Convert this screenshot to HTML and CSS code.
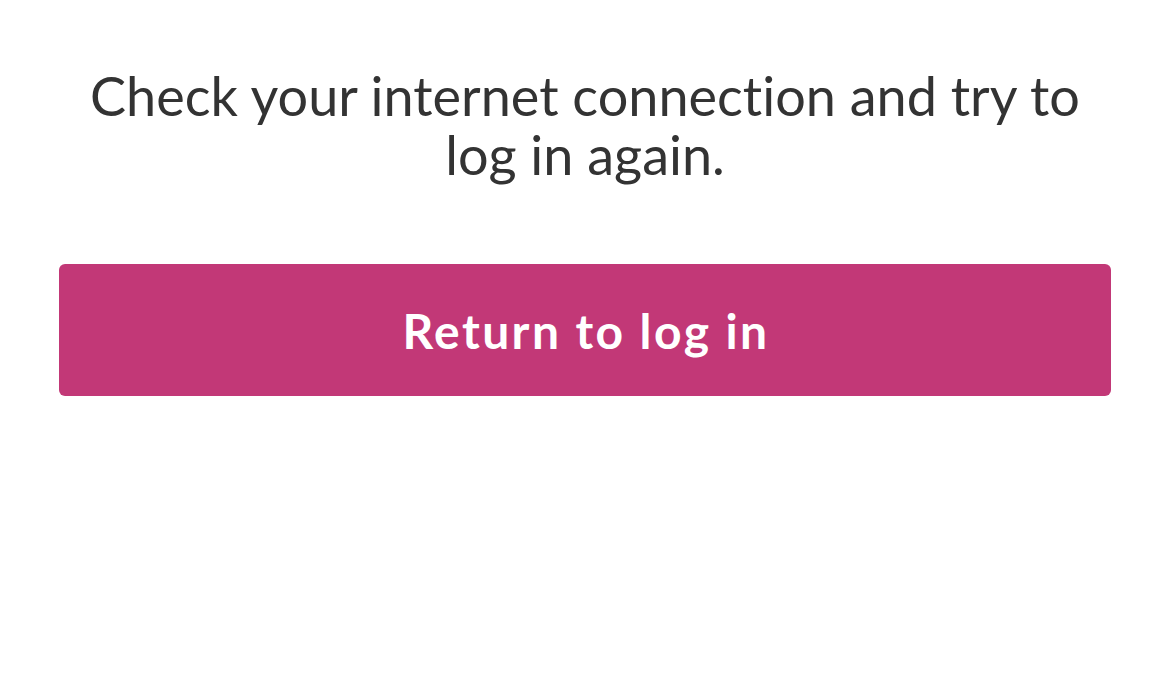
FILE: index.html
```html
<!DOCTYPE html>
<html lang="en">
<head>
<meta charset="utf-8">
<title>Connection error</title>
<link rel="stylesheet" href="styles.css">
</head>
<body>
<main class="page">
  <p class="message">Check your internet connection and try to log in again.</p>
  <button class="btn-primary" type="button">Return to log in</button>
</main>
</body>
</html>
```
FILE: styles.css
```css
html, body {
  margin: 0;
  padding: 0;
  background: #ffffff;
}
.page {
  display: flex;
  flex-direction: column;
  align-items: stretch;
  padding: 66px 59px 0;
  font-family: Lato, "Open Sans", sans-serif;
  font-variant-ligatures: none;
}
.message {
  margin: 0 0 80px;
  text-align: center;
  color: #333333;
  font-size: 54px;
  line-height: 59px;
  padding: 0 20px;
}
.btn-primary {
  height: 132px;
  border: none;
  border-radius: 6px;
  background: #c23877;
  color: #ffffff;
  font-family: Lato, "Open Sans", sans-serif;
  font-variant-ligatures: none;
  font-weight: 700;
  font-size: 48px;
  letter-spacing: 2.4px;
  padding: 0 0 0 2px;
  cursor: pointer;
}
```
